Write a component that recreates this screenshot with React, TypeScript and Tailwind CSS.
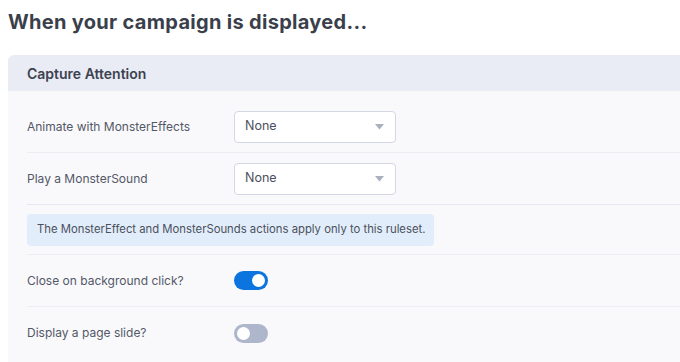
import { useState } from "react";

function Select({ value }: { value: string }) {
  return (
    <div className="flex items-center justify-between w-[162px] h-[32px] px-[10px] bg-white border border-[#d3d8e4] rounded-[4px] text-[12.5px] text-[#4b505c]">
      <span>{value}</span>
      <svg width="9" height="6" viewBox="0 0 9 6" className="mr-[1px]">
        <path d="M0 0 H9 L4.5 5.5 Z" fill="#a9b0c0" />
      </svg>
    </div>
  );
}

function Toggle({ on, onChange }: { on: boolean; onChange: () => void }) {
  return (
    <button
      type="button"
      onClick={onChange}
      className={
        "relative w-[34px] h-[19px] rounded-full " +
        (on ? "bg-[#0b74de]" : "bg-[#adb6cb]")
      }
    >
      <span
        className={
          "absolute top-[3px] w-[13px] h-[13px] rounded-full bg-white " +
          (on ? "right-[3px]" : "left-[3px]")
        }
      />
    </button>
  );
}

function App() {
  const [closeOnBg, setCloseOnBg] = useState(true);
  const [pageSlide, setPageSlide] = useState(false);

  return (
    <div className="w-[680px] h-[362px] overflow-hidden bg-white font-['Inter',sans-serif]">
      <h1 className="pl-[8px] pt-[7px] h-[55px] text-[20px] font-bold text-[#3a3f4b] tracking-[0.3px]">
        When your campaign is displayed...
      </h1>
      <div className="ml-[8px] rounded-tl-[6px] bg-[#f9f9fc] min-h-[320px]">
        <div className="h-[36px] flex items-center pl-[19px] bg-[#e9ecf4] rounded-tl-[6px] text-[14px] font-semibold text-[#3d4250]">
          Capture Attention
        </div>
        <div className="pl-[19px] pt-[10px]">
          <div className="flex items-center h-[52px] border-b border-[#edeef4]">
            <span className="w-[207px] text-[12px] text-[#535866]">Animate with MonsterEffects</span>
            <Select value="None" />
          </div>
          <div className="flex items-center h-[52px] border-b border-[#e6e9f2]">
            <span className="w-[207px] text-[12px] text-[#535866]">Play a MonsterSound</span>
            <Select value="None" />
          </div>
          <div className="h-[50px] flex items-center border-b border-[#edeef4]">
            <div className="w-[407px] h-[32px] flex items-center px-[10px] rounded-[4px] bg-[#e2edfb] text-[11.3px] text-[#4b505c] whitespace-nowrap">
              The MonsterEffect and MonsterSounds actions apply only to this ruleset.
            </div>
          </div>
          <div className="flex items-center h-[52px] border-b border-[#edeef4]">
            <span className="w-[207px] text-[12px] text-[#535866]">Close on background click?</span>
            <Toggle on={closeOnBg} onChange={() => setCloseOnBg(!closeOnBg)} />
          </div>
          <div className="flex items-center h-[52px]">
            <span className="w-[207px] text-[12px] text-[#535866]">Display a page slide?</span>
            <Toggle on={pageSlide} onChange={() => setPageSlide(!pageSlide)} />
          </div>
        </div>
      </div>
    </div>
  );
}

export default App;
